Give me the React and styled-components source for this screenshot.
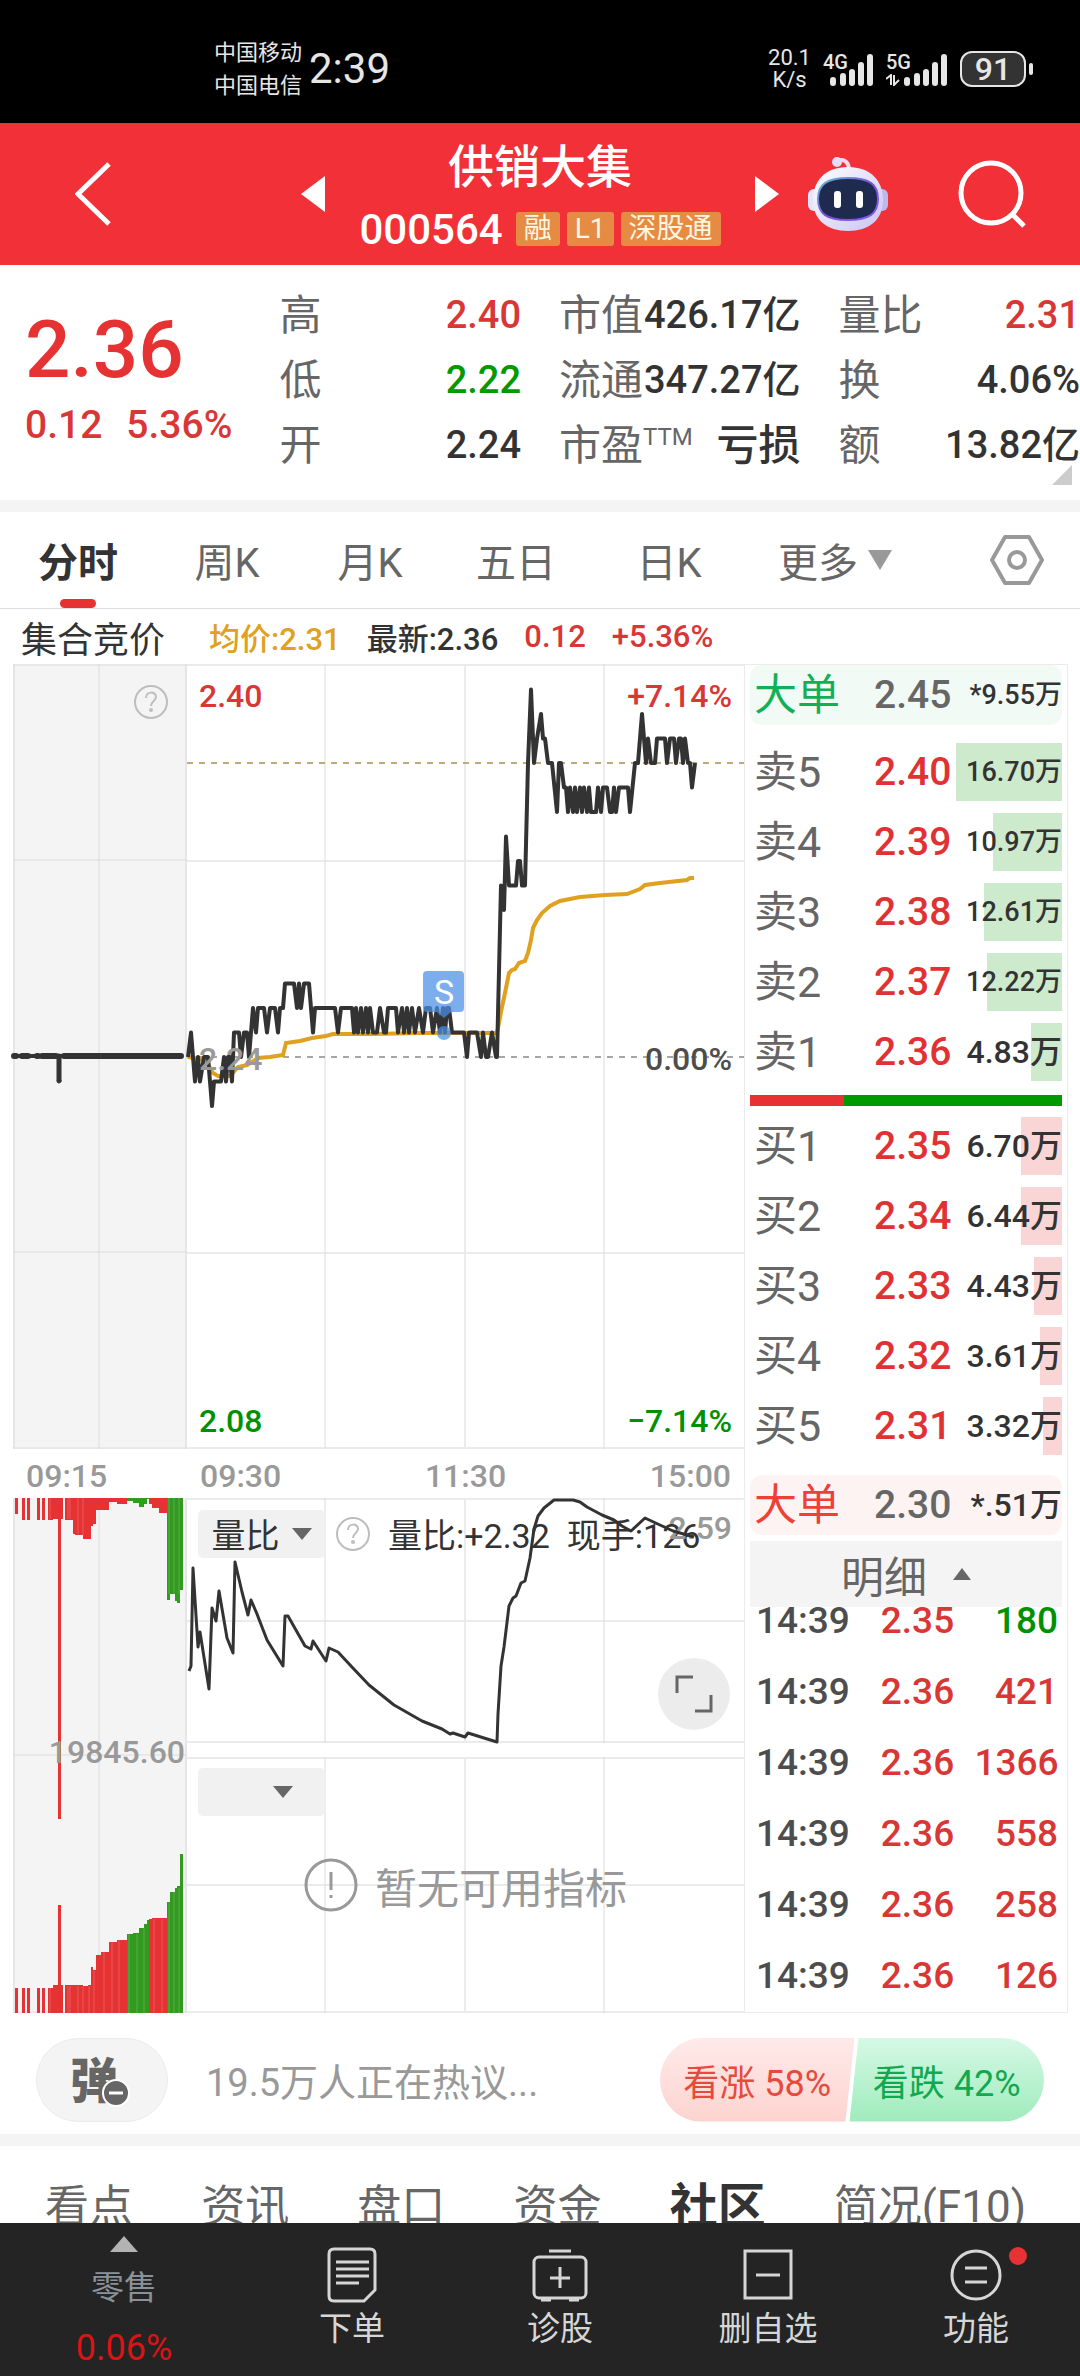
import { useState } from "react";
import styled, { createGlobalStyle } from "styled-components";

// Data
const quoteColumns = [
  [
    { label: "高", value: "2.40", color: "#d93636" },
    { label: "低", value: "2.22", color: "#009900" },
    { label: "开", value: "2.24" },
  ],
  [
    { label: "市值", value: "426.17亿" },
    { label: "流通", value: "347.27亿" },
    { label: "市盈", sup: "TTM", value: "亏损" },
  ],
  [
    { label: "量比", value: "2.31", color: "#d93636" },
    { label: "换", value: "4.06%" },
    { label: "额", value: "13.82亿" },
  ],
];

const periods = ["分时", "周K", "月K", "五日", "日K"];

const asks = [
  { name: "卖5", price: "2.40", amount: "16.70万", depth: 34 },
  { name: "卖4", price: "2.39", amount: "10.97万", depth: 22 },
  { name: "卖3", price: "2.38", amount: "12.61万", depth: 25 },
  { name: "卖2", price: "2.37", amount: "12.22万", depth: 24 },
  { name: "卖1", price: "2.36", amount: "4.83万", depth: 10 },
];

const bids = [
  { name: "买1", price: "2.35", amount: "6.70万", depth: 13 },
  { name: "买2", price: "2.34", amount: "6.44万", depth: 13 },
  { name: "买3", price: "2.33", amount: "4.43万", depth: 9 },
  { name: "买4", price: "2.32", amount: "3.61万", depth: 7 },
  { name: "买5", price: "2.31", amount: "3.32万", depth: 6 },
];

const trades = [
  { price: "2.35", volume: "180", down: true },
  { price: "2.36", volume: "421" },
  { price: "2.36", volume: "1366" },
  { price: "2.36", volume: "558" },
  { price: "2.36", volume: "258" },
  { price: "2.36", volume: "126" },
];

const sections = ["看点", "资讯", "盘口", "资金", "社区", "简况(F10)"];

// [x, ticks above 2.24]
const priceTicks = [
  [188, 0], [191, 1], [195, -1], [198, 0], [200, -1], [204, 0], [208, 0], [212, -2], [214, -1],
  [221, -1], [224, 0], [226, -1], [228, 0], [230, 0], [232, -1], [234, 1], [239, 1], [241, 0],
  [244, 1], [247, 1], [249, 0], [253, 2], [256, 1], [258, 2], [264, 2], [267, 1], [270, 2],
  [275, 2], [278, 1], [280, 2], [283, 2], [285, 3], [294, 3], [297, 2], [299, 3], [301, 2],
  [304, 3], [309, 3], [313, 1], [315, 2], [335, 2], [338, 1], [341, 2], [352, 2], [354, 1],
  [356, 2], [358, 1], [361, 2], [363, 1], [366, 2], [368, 1], [370, 2], [373, 1], [377, 1],
  [380, 2], [384, 1], [386, 1], [388, 2], [396, 2], [398, 1], [402, 2], [404, 1], [407, 2],
  [409, 1], [412, 2], [415, 1], [419, 2], [423, 1], [426, 2], [430, 2], [433, 1], [437, 2],
  [440, 1], [443, 2], [445, 1], [447, 2], [449, 2], [452, 1], [464, 1], [467, 0], [469, 1],
  [477, 1], [481, 0], [483, 1], [486, 0], [488, 0], [492, 1], [496, 0], [497, 0], [501, 7],
  [504, 6], [506, 9], [509, 7], [516, 7], [518, 8], [520, 8], [522, 7], [525, 7], [528, 12],
  [531, 15], [534, 12], [537, 13], [541, 14], [543, 13], [545, 13], [548, 12], [552, 12],
  [557, 10], [559, 12], [561, 12], [564, 11], [566, 11], [568, 10], [570, 11], [573, 10],
  [575, 11], [577, 10], [580, 11], [582, 10], [584, 11], [587, 10], [589, 11], [591, 10],
  [596, 10], [598, 11], [601, 10], [603, 11], [607, 11], [610, 10], [612, 10], [614, 11],
  [616, 10], [619, 11], [628, 11], [630, 10], [635, 12], [638, 12], [642, 14], [646, 12],
  [648, 13], [651, 12], [655, 12], [657, 13], [665, 13], [667, 12], [670, 13], [674, 13],
  [676, 12], [679, 13], [681, 13], [683, 12], [685, 13], [688, 12], [690, 12], [692, 11],
  [695, 12],
];
const pricePoints = priceTicks.map(([x, n]) => `${x},${1057 - n * 24.5}`).join(" ");

const averagePoints =
  "188,1057 205,1060 213,1073 218,1076 230,1076 238,1067 247,1065 258,1058 270,1057 283,1055 " +
  "286,1043 300,1041 312,1038 326,1036 333,1034 372,1034 420,1033 497,1033 498,1028 502,1007 " +
  "505,993 509,973 512,970 515,969 519,963 525,961 528,953 531,940 533,928 537,920 542,913 " +
  "550,906 560,901 580,897 605,895 627,894 640,889 645,885 660,883 687,880 690,878 694,878";

const ratioPoints =
  "189,1671 191,1666 193,1568 198,1647 200,1632 209,1689 212,1608 216,1621 219,1591 227,1638 " +
  "233,1653 235,1562 242,1592 248,1615 251,1600 257,1614 267,1640 283,1666 285,1616 288,1616 " +
  "305,1646 311,1649 313,1641 326,1661 329,1648 338,1652 351,1666 369,1685 394,1705 422,1721 " +
  "442,1729 450,1734 453,1733 465,1737 468,1733 484,1738 497,1742 498,1714 501,1666 504,1647 " +
  "509,1606 513,1598 516,1596 521,1583 525,1581 530,1558 534,1529 538,1516 544,1508 554,1500 " +
  "573,1500 580,1502 587,1507 602,1515 614,1520 622,1526 631,1531 645,1518 660,1525 673,1531 " +
  "694,1537";

// [from, to, upper height, lower height, green?]
const auctionBars = [
  [15, 18, 16, 25], [22, 25, 22, 25], [27, 30, 22, 25], [37, 40, 22, 25], [42, 45, 22, 25],
  [48, 53, 22, 25], [53, 58, 21, 28], [58, 61, 321, 108], [61, 63, 21, 28], [65, 73, 22, 28],
  [73, 75, 36, 28], [75, 83, 37, 28], [83, 88, 41, 27], [88, 91, 41, 28], [91, 93, 28, 46],
  [93, 96, 26, 43], [96, 101, 12, 58], [101, 109, 12, 61], [109, 117, 4, 71], [117, 127, 6, 73],
  [127, 133, 3, 79, 1], [133, 139, 5, 80, 1], [139, 144, 9, 85, 1], [144, 147, 6, 89, 1],
  [147, 149, 1, 93, 1], [149, 152, 6, 94], [152, 159, 10, 95], [159, 167, 15, 95],
  [167, 170, 102, 111, 1], [170, 175, 96, 121, 1], [175, 177, 103, 125, 1],
  [177, 180, 105, 127, 1], [180, 183, 92, 159, 1],
];

const QuestionIcon = ({ size = 36 }) => (
  <svg width={size} height={size} viewBox="0 0 36 36" fill="none" stroke="#bdbdbd" strokeWidth="2">
    <circle cx="18" cy="18" r="16" />
    <path d="M13 14c0-7 10-7 10-1 0 4-5 4-5 9" />
    <circle cx="18" cy="26" r="1" />
  </svg>
);

const Caret = ({ up, width = 20, height = 12, color = "#666" }) => (
  <svg width={width} height={height} viewBox="0 0 20 12" preserveAspectRatio="none">
    <path d={up ? "M0 12L10 0L20 12Z" : "M0 0H20L10 12Z"} fill={color} />
  </svg>
);

const Signal = ({ name, data }) => (
  <SignalBox $wide={data}>
    <span>{name}</span>
    <svg width="44" height="36" viewBox="0 0 44 36">
      <path
        d="M3 29V32M13 25V32M22 21V32M31 14V32M40 6V32"
        stroke="#e6e6e6"
        strokeWidth="6"
        strokeLinecap="round"
      />
    </svg>
    {data && (
      <DataArrows width="14" height="12" viewBox="0 0 14 12">
        <path d="M0 5L5 1V11M8 1V11L13 6" stroke="#e6e6e6" strokeWidth="2" fill="none" />
      </DataArrows>
    )}
  </SignalBox>
);

const Robot = () => (
  <svg width="82" height="76" viewBox="0 0 82 76">
    <defs>
      <linearGradient id="shell" x1="0" y1="0" x2="1" y2="1">
        <stop offset="0" stopColor="#fff" />
        <stop offset="1" stopColor="#c9c4f2" />
      </linearGradient>
      <linearGradient id="rim" x1="0" y1="0" x2="1" y2="1">
        <stop offset="0" stopColor="#63c4d8" />
        <stop offset="0.5" stopColor="#7a4fd6" />
        <stop offset="1" stopColor="#8b5cf0" />
      </linearGradient>
    </defs>
    <path d="M30 5C38 2 42 7 42 14" fill="none" stroke="#f3d9ea" strokeWidth="4" />
    <circle cx="30" cy="6" r="5" fill="#e5dcf7" />
    <rect x="1" y="33" width="14" height="22" rx="6" fill="#e6e4fa" />
    <rect x="67" y="33" width="14" height="22" rx="6" fill="#bdb9ef" />
    <path d="M41 11C64 11 76 25 76 44C76 64 62 75 41 75C20 75 6 64 6 44C6 25 18 11 41 11Z" fill="url(#shell)" />
    <path d="M41 22C62 22 71 28 71 43C71 58 62 64 41 64C20 64 11 58 11 43C11 28 20 22 41 22Z" fill="#1f2a4f" stroke="url(#rim)" strokeWidth="2" />
    <rect x="27" y="35" width="7" height="17" rx="3" fill="#fff" />
    <rect x="49" y="35" width="7" height="17" rx="3" fill="#fff" />
  </svg>
);

const AuctionPanel = () => (
  <Column>
    <ChartBox>
      <svg viewBox="13 664 174 785">
        <rect x="13" y="664" width="174" height="785" fill="#f4f4f4" />
        <path d="M14 664V1449M186 664V1449" stroke="#e6e6e6" strokeWidth="2" />
        <path d="M13 665H187M13 860H187M13 1252H187M13 1448H187M99 664V1449" stroke="#dcdcdc" />
        <g stroke="#333" fill="#333" strokeLinecap="round">
          <path d="M14 1056H181" strokeWidth="4" />
          <path d="M14 1056H16M22 1056H28M37 1056H38M42 1056H56M64 1056H181" strokeWidth="6" />
          <path d="M59 1056V1080" strokeWidth="5" />
          <circle cx="59" cy="1081" r="2" />
        </g>
      </svg>
      <HelpButton aria-label="集合竞价说明">
        <QuestionIcon />
      </HelpButton>
    </ChartBox>
    <Times>
      <span>09:15</span>
    </Times>
    <ChartBox>
      <svg viewBox="13 1498 174 515">
        <rect x="13" y="1498" width="174" height="515" fill="#f4f4f4" />
        <path d="M14 1498V2013M186 1498V2013" stroke="#e6e6e6" strokeWidth="2" />
        <path d="M13 1755H187M99 1498V2013M13 2012H187" stroke="#dcdcdc" />
        {auctionBars.map(([from, to, upper, lower, green]) => (
          <g key={from} fill={green ? "#339a20" : "#e63232"}>
            <rect x={from} y="1498" width={to - from} height={upper} />
            <rect x={from} y={2013 - lower} width={to - from} height={lower} />
          </g>
        ))}
        <path
          d="M50 1498V1519M68 1498V1519M70 1498V1519M78 1498V1534M83 1498V1535M169 1498V1594M174 1498V1594M179 1498V1594M50 1988V2013M68 1986V2013M70 1986V2013M78 1986V2013M83 1986V2013M89 1986V2013M94 1971V2013M104 1952V2013M112 1942V2013M119 1940V2013M129 1934V2013M137 1934V2013M144 1928V2013M154 1919V2013M162 1919V2013M169 1902V2013M174 1892V2013M179 1888V2013"
          stroke="#fff"
          strokeOpacity="0.2"
        />
      </svg>
      <VolumeMark>19845.60</VolumeMark>
    </ChartBox>
  </Column>
);

const TrendPanel = () => (
  <Column>
    <ChartBox>
      <svg viewBox="187 664 557 785">
        <path d="M187 665H744M187 861H744M187 1253H744M187 1448H744" stroke="#ebebeb" strokeWidth="2" />
        <path d="M465 664V1449" stroke="#ebebeb" strokeWidth="2" />
        <path d="M325 664V1449M604 664V1449" stroke="#dcdcdc" />
        <path d="M187 763H744" stroke="#c2a878" strokeWidth="2" strokeDasharray="6 6" />
        <path d="M187 1057H744" stroke="#a6a6a6" strokeWidth="2" strokeDasharray="6 6" />
        <polyline points={averagePoints} fill="none" stroke="#e0a020" strokeWidth="4" />
        <polyline points={pricePoints} fill="none" stroke="#333" strokeWidth="4" strokeLinejoin="round" />
        <g fill="#4a8fe8" fillOpacity="0.72">
          <path d="M427 971H460Q464 971 464 975V1008Q464 1012 460 1012H451L444 1018L437 1012H427Q423 1012 423 1008V975Q423 971 427 971Z" />
          <circle cx="444" cy="1033" r="7" />
        </g>
        <text x="444" y="1004" fill="#fff" fontSize="34" textAnchor="middle" fontFamily="Roboto, sans-serif">
          S
        </text>
      </svg>
      <Scale>
        <ScaleRow $color="#d93636">
          <span>2.40</span>
          <span>+7.14%</span>
        </ScaleRow>
        <ScaleRow $color="#4d4d4d">
          <Faded>2.24</Faded>
          <span>0.00%</span>
        </ScaleRow>
        <ScaleRow $color="#009100">
          <span>2.08</span>
          <span>−7.14%</span>
        </ScaleRow>
      </Scale>
    </ChartBox>
    <Times>
      <span>09:30</span>
      <span>11:30</span>
      <span>15:00</span>
    </Times>
    <ChartBox>
      <svg viewBox="187 1498 557 245">
        <path d="M187 1499H744M187 1621H744M187 1742H744M465 1498V1743" stroke="#ebebeb" strokeWidth="2" />
        <path d="M325 1498V1743M604 1498V1743" stroke="#dcdcdc" />
      </svg>
      <Indicator>
        <PickButton>
          量比
          <Caret />
        </PickButton>
        <QuestionIcon />
        <span>量比:+2.32</span>
        <span>现手:126</span>
      </Indicator>
      <MaxMark>2.59</MaxMark>
      <LineLayer viewBox="187 1498 557 245">
        <polyline points={ratioPoints} fill="none" stroke="#333" strokeWidth="3" strokeLinejoin="round" />
      </LineLayer>
      <ExpandButton aria-label="全屏">
        <svg width="40" height="40" viewBox="0 0 40 40" fill="none" stroke="#666" strokeWidth="3">
          <path d="M3 19V3H19M37 21V37H21" />
        </svg>
      </ExpandButton>
    </ChartBox>
    <ChartBox $spaced>
      <svg viewBox="187 1757 557 256">
        <path d="M187 1758H744M187 1885H744M187 2012H744M465 1757V2013" stroke="#ebebeb" strokeWidth="2" />
        <path d="M325 1757V2013M604 1757V2013" stroke="#dcdcdc" />
      </svg>
      <Indicator>
        <PickButton $empty aria-label="选择指标">
          <Caret />
        </PickButton>
      </Indicator>
      <EmptyNote>
        <svg width="54" height="54" viewBox="0 0 54 54" fill="none" stroke="#999" strokeWidth="3">
          <circle cx="27" cy="27" r="25" />
          <path d="M27 14V32M27 37V40" />
        </svg>
        暂无可用指标
      </EmptyNote>
    </ChartBox>
  </Column>
);

const Level = ({ item, tone }) => (
  <LevelRow>
    <LevelName>{item.name}</LevelName>
    <Price>{item.price}</Price>
    <Amount $small={item.amount.length > 5}>{item.amount}</Amount>
    <Depth $tone={tone} style={{ width: `${item.depth}%` }} />
  </LevelRow>
);

const OrderBook = () => (
  <Book>
    <BigRow $bg="#f2faf6">
      <LevelName $color="#12b055">大单</LevelName>
      <Price $muted>2.45</Price>
      <Amount $small>*9.55万</Amount>
    </BigRow>
    <Levels>
      {asks.map((item) => (
        <Level key={item.name} item={item} tone="#cdeacd" />
      ))}
    </Levels>
    <Balance />
    <Levels>
      {bids.map((item) => (
        <Level key={item.name} item={item} tone="#f9d5d5" />
      ))}
    </Levels>
    <BigRow $bg="#fef3f3" $last>
      <LevelName $color="#ee4035">大单</LevelName>
      <Price $muted>2.30</Price>
      <Amount>*.51万</Amount>
    </BigRow>
    <DetailButton>
      明细
      <Caret up width={18} />
    </DetailButton>
    <TradeList>
      <TradeTable>
        <tbody>
          {trades.map((trade) => (
            <tr key={trade.volume}>
              <TradeCell>14:39</TradeCell>
              <TradeCell $color="#d93636">{trade.price}</TradeCell>
              <TradeCell $end $color={trade.down ? "#009100" : "#d93636"}>
                {trade.volume}
              </TradeCell>
            </tr>
          ))}
        </tbody>
      </TradeTable>
    </TradeList>
  </Book>
);

const App = () => {
  const [period, setPeriod] = useState("分时");
  const [section, setSection] = useState("社区");

  return (
    <Page>
      <GlobalStyle />
      <StatusBar>
        <Carriers>
          <span>中国移动</span>
          <span>中国电信</span>
        </Carriers>
        <Clock>2:39</Clock>
        <Speed>
          <span>20.1</span>
          <span>K/s</span>
        </Speed>
        <Signal name="4G" />
        <Signal name="5G" data />
        <Battery>91</Battery>
      </StatusBar>

      <Header>
        <BackButton aria-label="返回">
          <svg width="36" height="64" viewBox="0 0 36 64" fill="none" stroke="#fff" strokeWidth="5">
            <path d="M34 2L3 32L34 62" />
          </svg>
        </BackButton>
        <Stock>
          <IconButton aria-label="上一只">
            <svg width="24" height="36" viewBox="0 0 24 36">
              <path d="M24 0V36L0 18Z" fill="#fff" />
            </svg>
          </IconButton>
          <StockName>
            <h1>供销大集</h1>
            <CodeRow>
              <Code>000564</Code>
              <Tag>融</Tag>
              <Tag>L1</Tag>
              <Tag>深股通</Tag>
            </CodeRow>
          </StockName>
          <IconButton aria-label="下一只">
            <svg width="24" height="36" viewBox="0 0 24 36">
              <path d="M0 0V36L24 18Z" fill="#fff" />
            </svg>
          </IconButton>
        </Stock>
        <HeaderTools>
          <IconButton aria-label="智能助手">
            <Robot />
          </IconButton>
          <IconButton aria-label="搜索">
            <svg width="68" height="68" viewBox="0 0 68 68" fill="none" stroke="#fff" strokeWidth="5">
              <circle cx="33" cy="33" r="30" />
              <path d="M54 54L66 66" />
            </svg>
          </IconButton>
        </HeaderTools>
      </Header>

      <Quote>
        <Latest>
          <LatestPrice>2.36</LatestPrice>
          <Change>
            <span>0.12</span>
            <span>5.36%</span>
          </Change>
        </Latest>
        {quoteColumns.map((column) => (
          <QuoteColumn key={column[0].label}>
            {column.map((row) => (
              <QuoteRow key={row.label}>
                <dt>
                  {row.label}
                  {row.sup && <sup>{row.sup}</sup>}
                </dt>
                <QuoteValue $color={row.color} $word={Boolean(row.sup)}>
                  {row.value}
                </QuoteValue>
              </QuoteRow>
            ))}
          </QuoteColumn>
        ))}
        <Corner />
      </Quote>

      <Periods>
        {periods.map((name) => (
          <PeriodTab key={name} $active={name === period} onClick={() => setPeriod(name)}>
            {name}
          </PeriodTab>
        ))}
        <PeriodTab>
          更多
          <Caret width={24} height={20} color="#999" />
        </PeriodTab>
        <SettingsButton aria-label="设置">
          <svg width="56" height="52" viewBox="0 0 56 52" fill="none" stroke="#999" strokeWidth="4" strokeLinejoin="round">
            <path d="M16 3H40L53 26L40 49H16L3 26Z" />
            <circle cx="28" cy="26" r="8" />
          </svg>
        </SettingsButton>
      </Periods>

      <Summary>
        <Auction>集合竞价</Auction>
        <Info $color="#e0a020">均价:2.31</Info>
        <Info>最新:2.36</Info>
        <Info $color="#d93636">0.12</Info>
        <Info $color="#d93636">+5.36%</Info>
      </Summary>

      <Board>
        <AuctionPanel />
        <TrendPanel />
        <OrderBook />
      </Board>

      <Discussion>
        <DanmuButton aria-label="弹幕">
          弹
          <DanmuOff width="28" height="28" viewBox="0 0 28 28">
            <circle cx="14" cy="14" r="13" fill="#666" stroke="#fff" strokeWidth="2" />
            <path d="M7 14H21" stroke="#fff" strokeWidth="3" />
          </DanmuOff>
        </DanmuButton>
        <Talk href="#talk">19.5万人正在热议...</Talk>
        <Votes>
          <Vote $up>看涨 58%</Vote>
          <Vote>看跌 42%</Vote>
        </Votes>
      </Discussion>

      <Sections>
        {sections.map((name) => (
          <SectionTab key={name} $active={name === section} onClick={() => setSection(name)}>
            {name}
          </SectionTab>
        ))}
      </Sections>

      <BottomNav>
        <IndexButton>
          <Caret up width={28} height={16} color="#b3b3b3" />
          <span>零售</span>
          <strong>0.06%</strong>
        </IndexButton>
        <NavButton>
          <svg width="56" height="56" viewBox="0 0 56 56" fill="none" stroke="#d6d6d6" strokeWidth="3">
            <path d="M10 2H46Q51 2 51 7V43L40 54H10Q5 54 5 49V7Q5 2 10 2Z" />
            <path d="M12 15H45M12 22H45M12 29H45M12 36H35" />
          </svg>
          下单
        </NavButton>
        <NavButton>
          <svg width="56" height="56" viewBox="0 0 56 56" fill="none" stroke="#d6d6d6" strokeWidth="3">
            <rect x="2" y="10" width="52" height="41" rx="5" />
            <path d="M17 4H39M28 20V41M18 31H38M9 53H19M37 53H47" />
          </svg>
          诊股
        </NavButton>
        <NavButton>
          <svg width="56" height="56" viewBox="0 0 56 56" fill="none" stroke="#d6d6d6" strokeWidth="3">
            <path d="M5 4H51V51H5ZM16 28H40" />
          </svg>
          删自选
        </NavButton>
        <NavButton>
          <svg width="56" height="56" viewBox="0 0 56 56" fill="none" stroke="#d6d6d6" strokeWidth="3">
            <circle cx="28" cy="28" r="24" />
            <path d="M17 21H39M17 35H39" />
          </svg>
          功能
          <Dot />
        </NavButton>
      </BottomNav>
    </Page>
  );
};

const GlobalStyle = createGlobalStyle`
  * {
    box-sizing: border-box;
  }
  body {
    margin: 0;
    background: #fff;
    color: #333;
    font-family: Roboto, "Noto Sans CJK SC", sans-serif;
  }
  button {
    border: none;
    padding: 0;
    background: none;
    color: inherit;
    font: inherit;
    cursor: pointer;
  }
  h1, dl, dd {
    margin: 0;
  }
  svg {
    display: block;
    flex-shrink: 0;
  }
`;

const Page = styled.div`
  display: flex;
  flex-direction: column;
  min-height: 100vh;
`;

const StatusBar = styled.div`
  display: flex;
  align-items: center;
  height: 123px;
  padding: 14px 54px 0 214px;
  background: #000;
  color: #e6e6e6;
`;

const Carriers = styled.div`
  display: flex;
  flex-direction: column;
  font-size: 22px;
  line-height: 33px;
`;

const Clock = styled.div`
  margin: 0 auto 0 7px;
  font-size: 42px;
`;

const Speed = styled.div`
  display: flex;
  flex-direction: column;
  align-items: center;
  margin-right: 12px;
  font-size: 22px;
  line-height: 22px;
`;

const SignalBox = styled.div`
  position: relative;
  margin-right: 12px;
  padding-left: ${(props) => (props.$wide ? 18 : 7)}px;

  span {
    position: absolute;
    top: 0;
    left: 0;
    font-size: 20px;
    font-weight: 500;
    line-height: 22px;
  }
`;

const DataArrows = styled.svg`
  position: absolute;
  left: 0;
  bottom: 1px;
`;

const Battery = styled.div`
  position: relative;
  width: 66px;
  height: 36px;
  border: 2px solid #e6e6e6;
  border-radius: 12px;
  background: #333;
  font-size: 32px;
  font-weight: 500;
  line-height: 32px;
  text-align: center;

  &::after {
    content: "";
    position: absolute;
    top: 10px;
    right: -9px;
    width: 4px;
    height: 12px;
    border-radius: 2px;
    background: #e6e6e6;
  }
`;

const Header = styled.header`
  display: grid;
  grid-template-columns: 301fr 478fr 301fr;
  align-items: center;
  height: 142px;
  background: #f23037;
  color: #fff;
`;

const IconButton = styled.button`
  display: flex;
`;

const BackButton = styled(IconButton)`
  padding-left: 75px;
`;

const Stock = styled.div`
  display: flex;
  align-items: center;
  justify-content: space-between;
`;

const StockName = styled.div`
  display: flex;
  flex-direction: column;
  align-items: center;
  padding-top: 8px;

  h1 {
    font-size: 46px;
    font-weight: 500;
    line-height: 62px;
  }
`;

const CodeRow = styled.div`
  display: flex;
  align-items: center;
  gap: 7px;
  height: 62px;
`;

const Code = styled.span`
  margin-right: 6px;
  font-size: 42px;
  font-weight: 500;
`;

const Tag = styled.span`
  padding: 0 8px;
  border-radius: 3px;
  background: #e68b43;
  color: #fff6e0;
  font-size: 28px;
  line-height: 34px;
`;

const HeaderTools = styled.div`
  display: flex;
  align-items: center;
  justify-content: space-between;
  padding: 0 54px 0 28px;
`;

const Quote = styled.section`
  position: relative;
  display: grid;
  grid-template-columns: repeat(4, minmax(0, 1fr));
  gap: 38px;
  padding: 18px 0 22px;
  border-bottom: 12px solid #f4f4f4;
`;

const Latest = styled.div`
  padding: 18px 0 0 25px;
  color: #e63232;
  font-weight: 500;
`;

const LatestPrice = styled.div`
  font-size: 80px;
  line-height: 98px;
`;

const Change = styled.div`
  display: flex;
  gap: 24px;
  color: #d93636;
  font-size: 39px;
  line-height: 52px;
`;

const QuoteColumn = styled.dl`
  display: flex;
  flex-direction: column;
`;

const QuoteRow = styled.div`
  display: flex;
  align-items: center;
  justify-content: space-between;
  height: 65px;
  font-size: 42px;
  line-height: 65px;
  white-space: nowrap;

  dt {
    color: #666;
  }
  sup {
    font-size: 24px;
    line-height: 24px;
  }
`;

const QuoteValue = styled.dd`
  color: ${(props) => props.$color || "#333"};
  font-size: ${(props) => (props.$word ? 42 : 38)}px;
  font-weight: 500;
`;

const Corner = styled.i`
  position: absolute;
  right: 8px;
  bottom: 15px;
  border: 10px solid #ccc;
  border-top-color: transparent;
  border-left-color: transparent;
`;

const Periods = styled.nav`
  display: grid;
  grid-template-columns: 156fr 142fr 144fr 148fr 158fr 174fr 158fr;
  height: 97px;
  border-bottom: 1px solid #e0e0e0;
`;

const PeriodTab = styled.button`
  position: relative;
  display: flex;
  align-items: center;
  justify-content: center;
  gap: 10px;
  color: ${(props) => (props.$active ? "#333" : "#666")};
  font-size: 40px;
  font-weight: ${(props) => (props.$active ? 700 : 400)};

  &::after {
    content: "";
    position: absolute;
    bottom: 0;
    display: ${(props) => (props.$active ? "block" : "none")};
    width: 36px;
    height: 9px;
    border-radius: 5px;
    background: #e63232;
  }
`;

const SettingsButton = styled.button`
  display: flex;
  align-items: center;
  justify-content: flex-end;
  padding-right: 35px;
`;

const Summary = styled.div`
  display: flex;
  align-items: center;
  gap: 26px;
  height: 55px;
  padding-left: 21px;
  font-size: 31px;
`;

const Auction = styled.span`
  margin-right: 18px;
  font-size: 36px;
`;

const Info = styled.span`
  color: ${(props) => props.$color || "#333"};
  font-weight: 500;
`;

const Board = styled.main`
  display: grid;
  grid-template-columns: 174fr 557fr 324fr;
  padding: 0 12px 0 13px;
`;

const Column = styled.div`
  display: flex;
  flex-direction: column;
  min-width: 0;
`;

const ChartBox = styled.div`
  position: relative;
  margin-top: ${(props) => (props.$spaced ? "14px" : "0")};

  > svg {
    width: 100%;
    height: auto;
    overflow: visible;
  }
`;

const HelpButton = styled(IconButton)`
  position: absolute;
  top: 20px;
  right: 18px;
`;

const Times = styled.div`
  display: flex;
  align-items: center;
  justify-content: space-between;
  height: 49px;
  padding: 4px 13px 0;
  color: #999;
  font-size: 32px;
  font-weight: 500;
`;

const VolumeMark = styled.span`
  position: absolute;
  top: 232px;
  right: 2px;
  color: #999;
  font-size: 32px;
  font-weight: 500;
  line-height: 44px;
`;

const Scale = styled.div`
  position: absolute;
  inset: 10px 12px 6px;
  display: flex;
  flex-direction: column;
  justify-content: space-between;
`;

const ScaleRow = styled.div`
  display: flex;
  justify-content: space-between;
  color: ${(props) => props.$color};
  font-size: 32px;
  font-weight: 500;
  line-height: 44px;
`;

const Faded = styled.span`
  color: #999;
`;

const Indicator = styled.div`
  position: absolute;
  top: 11px;
  left: 11px;
  display: flex;
  align-items: center;
  gap: 10px;
  font-size: 34px;
  white-space: nowrap;

  span {
    margin-left: 7px;
  }
`;

const PickButton = styled.button`
  display: flex;
  align-items: center;
  justify-content: center;
  gap: 12px;
  width: 127px;
  height: 48px;
  padding-left: ${(props) => (props.$empty ? "42px" : "0")};
  border-radius: 5px;
  background: #f1f1f1;
`;

const MaxMark = styled.span`
  position: absolute;
  top: 8px;
  right: 12px;
  color: #999;
  font-size: 32px;
  font-weight: 500;
  line-height: 44px;
`;

const LineLayer = styled.svg`
  position: absolute;
  top: 0;
  left: 0;
  pointer-events: none;
`;

const ExpandButton = styled.button`
  position: absolute;
  right: 14px;
  bottom: 13px;
  display: flex;
  align-items: center;
  justify-content: center;
  width: 72px;
  height: 72px;
  border-radius: 50%;
  background: #ececec;
`;

const EmptyNote = styled.div`
  position: absolute;
  inset: 0;
  display: flex;
  align-items: center;
  justify-content: center;
  gap: 17px;
  color: #999;
  font-size: 42px;
`;

const Book = styled.section`
  display: flex;
  flex-direction: column;
  min-width: 0;
  padding: 0 5px;
  border: 1px solid #ebebeb;
`;

const BookRow = styled.div`
  position: relative;
  display: grid;
  grid-template-columns: 120fr 188fr;
  align-items: center;
  padding-left: 4px;
  white-space: nowrap;
`;

const BigRow = styled(BookRow)`
  height: 60px;
  margin: ${(props) => (props.$last ? "14px 0 6px" : "0 0 12px")};
  border-radius: 12px;
  background: ${(props) => props.$bg};
`;

const Levels = styled.div`
  display: flex;
  flex-direction: column;
`;

const LevelRow = styled(BookRow)`
  height: 70px;
`;

const LevelName = styled.span`
  color: ${(props) => props.$color || "#666"};
  font-size: 43px;
  line-height: 58px;
`;

const Price = styled.span`
  color: ${(props) => (props.$muted ? "#666" : "#e03232")};
  font-size: 39px;
  font-weight: 500;
  line-height: 58px;
`;

const Amount = styled.span`
  position: absolute;
  right: 0;
  z-index: 1;
  font-size: ${(props) => (props.$small ? 27 : 32)}px;
  font-weight: 500;
  line-height: 58px;
`;

const Depth = styled.i`
  position: absolute;
  top: 6px;
  right: 0;
  bottom: 6px;
  background: ${(props) => props.$tone};
`;

const Balance = styled.div`
  height: 11px;
  margin: 8px 0 5px;
  background: linear-gradient(to right, #e63232 30%, #009900 30%);
`;

const DetailButton = styled.button`
  display: flex;
  align-items: center;
  justify-content: center;
  gap: 26px;
  height: 66px;
  background: #f4f4f4;
  color: #666;
  font-size: 43px;
`;

const TradeList = styled.div`
  display: flex;
  align-items: flex-end;
  height: 404px;
  overflow: hidden;
`;

const TradeTable = styled.table`
  width: 100%;
  border-collapse: collapse;
  table-layout: fixed;
`;

const TradeCell = styled.td`
  width: ${(props) => (props.$end ? "30%" : "auto")};
  height: 71px;
  padding: 0 4px 0 6px;
  color: ${(props) => props.$color || "#4d4d4d"};
  font-size: 37px;
  font-weight: 500;
  line-height: 71px;
  text-align: ${(props) => (props.$end ? "right" : "left")};

  &:first-child {
    width: 40%;
  }
`;

const Discussion = styled.section`
  display: flex;
  align-items: center;
  height: 133px;
  padding: 12px 36px 0;
  border-bottom: 12px solid #f4f4f4;
`;

const DanmuButton = styled.button`
  position: relative;
  width: 132px;
  height: 84px;
  border: 1px solid #ebebeb;
  border-radius: 42px;
  background: #f4f4f4;
  color: #666;
  font-size: 48px;
  font-weight: 900;
  padding: 0 16px 6px 0;
`;

const DanmuOff = styled.svg`
  position: absolute;
  right: 37px;
  bottom: 14px;
`;

const Talk = styled.a`
  margin: 0 auto 0 38px;
  color: #999;
  font-size: 38px;
  text-decoration: none;
`;

const Votes = styled.div`
  display: flex;
  width: 384px;
`;

const Vote = styled.button`
  flex: 1;
  height: 84px;
  margin-left: ${(props) => (props.$up ? "0" : "-5px")};
  border-radius: ${(props) => (props.$up ? "42px 0 0 42px" : "0 42px 42px 0")};
  background: ${(props) =>
    props.$up
      ? "linear-gradient(#feeae9, #fdd3cf)"
      : "linear-gradient(#d6f9e5, #9febbd)"};
  clip-path: ${(props) =>
    props.$up
      ? "polygon(0 0, 100% 0, calc(100% - 9px) 100%, 0 100%)"
      : "polygon(9px 0, 100% 0, 100% 100%, 0 100%)"};
  color: ${(props) => (props.$up ? "#e64a3c" : "#12a850")};
  font-size: 36px;
`;

const Sections = styled.nav`
  display: flex;
  justify-content: space-between;
  height: 77px;
  padding: 30px 54px 0 45px;
  overflow: hidden;
`;

const SectionTab = styled.button`
  height: 62px;
  color: ${(props) => (props.$active ? "#333" : "#666")};
  font-size: ${(props) => (props.$active ? 48 : 44)}px;
  font-weight: ${(props) => (props.$active ? 700 : 400)};
  line-height: 62px;
  white-space: nowrap;
`;

const BottomNav = styled.nav`
  position: sticky;
  bottom: 0;
  z-index: 2;
  display: grid;
  grid-template-columns: 248fr 208fr 208fr 208fr 208fr;
  flex-grow: 1;
  min-height: 153px;
  background: #242424;
`;

const NavButton = styled.button`
  position: relative;
  display: flex;
  flex-direction: column;
  align-items: center;
  gap: 2px;
  padding-top: 24px;
  color: #d6d6d6;
  font-size: 33px;
  line-height: 48px;
`;

const IndexButton = styled(NavButton)`
  gap: 12px;
  padding-top: 13px;
  color: #8a9299;

  strong {
    color: #d91414;
    font-weight: 400;
    font-size: 36px;
  }
`;

const Dot = styled.i`
  position: absolute;
  top: 24px;
  left: 137px;
  width: 18px;
  height: 18px;
  border-radius: 50%;
  background: #e63232;
`;

export default App;
